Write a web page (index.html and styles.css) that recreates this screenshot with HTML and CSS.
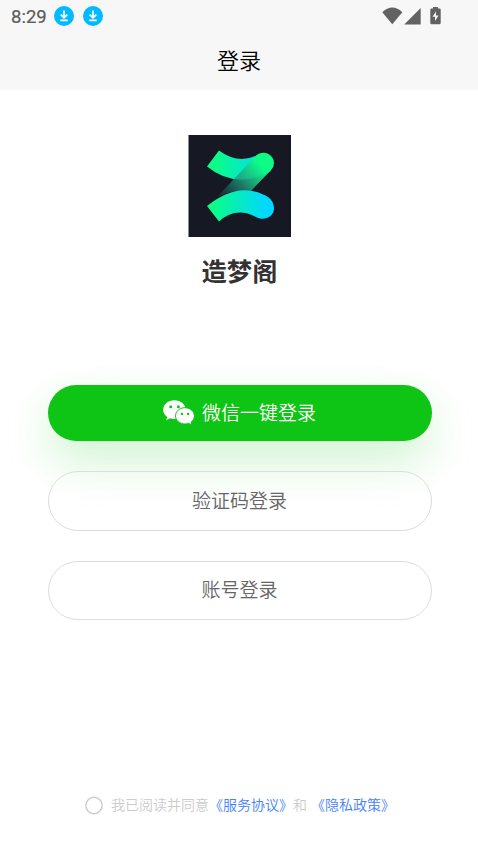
FILE: index.html
```html
<!DOCTYPE html>
<html lang="zh-CN">
<head>
<meta charset="utf-8">
<title>登录</title>
<link rel="stylesheet" href="styles.css">
</head>
<body>
<header class="header">
  <div class="status">
    <span class="time">8:29</span>
    <svg class="download" viewBox="0 0 20 20"><circle cx="10" cy="10" r="10" fill="#00baff"/><path d="M10 4.500v7M6.700 8.600l3.300 3.300 3.300-3.300M6.300 14.300h7.400" fill="none" stroke="#fff" stroke-width="1.700"/></svg>
    <svg class="download" viewBox="0 0 20 20"><circle cx="10" cy="10" r="10" fill="#00baff"/><path d="M10 4.500v7M6.700 8.600l3.300 3.300 3.300-3.300M6.300 14.300h7.400" fill="none" stroke="#fff" stroke-width="1.700"/></svg>
    <svg class="signals" viewBox="382 6 60 20" fill="#626262"><path d="M382.300 12.200Q392.300 3 402.300 12.200L392.300 24.200z"/><path d="M404.200 24.400L420.700 8v16.400z"/><path fill-rule="evenodd" d="M433 8.500V7h5v1.500h1.500q1.200 0 1.200 1.200v13.300q0 1.300-1.200 1.300h-8q-1.200 0-1.200-1.300V9.700q0-1.200 1.200-1.200zM436 11.500l-3.500 5.300h2.500v4.200l3.600-5.500H436z"/></svg>
  </div>
  <h1 class="title">登录</h1>
</header>
<main class="main">
  <svg class="logo" viewBox="188 135 103 102">
    <defs>
      <linearGradient id="top" gradientUnits="userSpaceOnUse" x1="207" y1="0" x2="262" y2="0"><stop offset=".15" stop-color="#0cfc86"/><stop offset="1" stop-color="#00dcf2"/></linearGradient>
      <linearGradient id="bottom" gradientUnits="userSpaceOnUse" x1="207" y1="0" x2="266" y2="0"><stop offset=".1" stop-color="#0cfc86"/><stop offset="1" stop-color="#00d8ff"/></linearGradient>
      <linearGradient id="fold" gradientUnits="userSpaceOnUse" x1="267" y1="159" x2="222" y2="201"><stop offset=".15" stop-color="#0cfc86"/><stop offset=".5" stop-color="#20a581" stop-opacity=".85"/><stop offset="1" stop-color="#1c5960" stop-opacity=".3"/></linearGradient>
    </defs>
    <rect x="188.500" y="135" width="102.500" height="102" fill="#161824"/>
    <path d="M219 150.500Q237 164 255.500 156L271 171Q236 190 207 166.500z" fill="url(#top)"/>
    <path d="M255.500 156C263 149 274 154 274 163Q274 167 271 170L249 193Q235 188 217 197z" fill="url(#fold)"/>
    <path d="M207 206Q237 182 263 194.500C270 197 274 202 274 208.500C274 217 264 221 257 217.500Q236 206 219 221.500z" fill="url(#bottom)"/>
  </svg>
  <h2 class="name">造梦阁</h2>
  <div class="actions">
    <button class="btn wechat">
      <svg class="wechat-icon" viewBox="163 399 32 27"><path d="M174.500 400.300c-6.300 0-11.300 4.200-11.300 9.500 0 3 1.500 5.500 4 7.300l-1 3.200 3.800-2q2.100.7 4.500.7c6.200 0 11.200-4.200 11.200-9.300s-5-9.400-11.200-9.400z" fill="#fff"/><path d="M185 407.700c5.300 0 9.400 3.700 9.400 8.200 0 2.500-1.300 4.700-3.300 6.200l.8 3-3.100-1.700q-1.800.6-3.800.6c-5.300 0-9.500-3.600-9.500-8.100s4.200-8.200 9.500-8.200z" fill="#fff" stroke="#0ec414" stroke-width="1"/><g fill="#0ec414"><circle cx="170.700" cy="406.800" r="1.500"/><circle cx="178.400" cy="406.800" r="1.500"/><circle cx="181.900" cy="413.900" r="1.200"/><circle cx="188.100" cy="413.900" r="1.200"/></g></svg>
      <span>微信一键登录</span>
    </button>
    <button class="btn">验证码登录</button>
    <button class="btn account">账号登录</button>
  </div>
</main>
<footer class="agreement"><svg class="radio" viewBox="0 0 18 18"><circle cx="9" cy="9.500" r="8.200" fill="none" stroke="#ccc" stroke-width="1.400"/></svg><span class="text">我已阅读并同意</span><a class="link">《服务协议》</a><span class="text">和</span><a class="link privacy">《隐私政策》</a></footer>
</body>
</html>
```
FILE: styles.css
```css
* { box-sizing: border-box; }
body { margin: 0; height: 850px; display: flex; flex-direction: column; background: #fff; font-family: "Noto Sans CJK SC", sans-serif; overflow: hidden; }
.header { height: 90px; background: #f7f7f7; flex: none; }
.status { height: 32px; padding: 0 36px 0 11px; display: flex; align-items: center; }
.time { width: 43px; font: 400 18.5px/32px Roboto, sans-serif; color: #5c5c5c; -webkit-text-stroke: .2px #5c5c5c; padding-top: 2px; }
.download { width: 20px; height: 20px; margin-right: 9px; }
.signals { width: 60px; height: 20px; margin-left: auto; }
.title { margin: 0; font-size: 22px; line-height: 54px; font-weight: 350; text-align: center; color: #000; }
.main { display: flex; flex-direction: column; align-items: center; padding: 45px 46px 0 48px; }
.logo { width: 103px; height: 102px; margin-right: 1px; }
.name { margin: 14px 1px 0 0; font-size: 25.3px; line-height: 38px; font-weight: 700; color: #333; }
.actions { width: 384px; margin-top: 96px; display: flex; flex-direction: column; gap: 30px; }
.btn { height: 60px; padding: 0 1px 2px 0; border: 1px solid #ddd; border-radius: 30px; background: transparent; display: flex; align-items: center; justify-content: center; font: 400 19px/28px "Noto Sans CJK SC", sans-serif; font-weight: 350; color: #666; }
.account { height: 59px; padding-bottom: 3px; }
.wechat { height: 56px; padding: 0 1px 3px 0; border: 0; background: #0ec414; color: #fff; gap: 7px; box-shadow: 0 20px 48px rgba(14, 196, 20, .2); }
.wechat-icon { width: 32px; height: 27px; position: relative; top: 1px; }
.agreement { margin: auto 0 34px 85px; height: 22px; display: flex; align-items: center; font-size: 14px; line-height: 20px; color: #ccc; white-space: nowrap; font-weight: 350; }
.text, .link { padding-bottom: 2px; }
.radio { width: 18px; height: 18px; margin-right: 8px; overflow: visible; }
.link { color: #4381fb; }
.privacy { margin-left: 4px; }
```
